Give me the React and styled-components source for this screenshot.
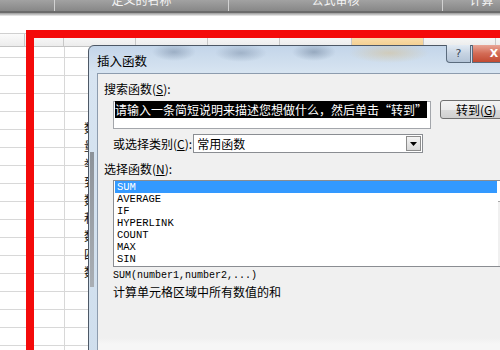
import React from "react";
import styled, { createGlobalStyle } from "styled-components";

const GlobalStyle = createGlobalStyle`
  html, body {
    margin: 0;
    padding: 0;
    background: #ffffff;
  }
  body {
    font-family: "Noto Sans CJK SC", "Noto Sans", sans-serif;
  }
`;

const ribbonGroups = [
  { label: "", width: 55 },
  { label: "定义的名称", width: 174 },
  { label: "公式审核", width: 214 },
  { label: "计算", width: 78 },
];

const headerCells = [
  { width: 25 },
  { width: 39 },
  { width: 72 },
  { width: 72 },
  { width: 72 },
  { width: 72 },
  { width: 72, active: true },
  { width: 72 },
  { width: 72 },
];

// text in the sheet column that the dialog mostly hides
const sheetText = ["", "", "", "", "数", "量", "举", "到", "数", "和", "数", "四", "数"];

const functions = ["SUM", "AVERAGE", "IF", "HYPERLINK", "COUNT", "MAX", "SIN"];

const App = () => {
  return (
    <Page>
      <GlobalStyle />
      <Ribbon>
        {ribbonGroups.map((g, i) => (
          <RibbonGroup key={i} $width={g.width}>
            <RibbonLabel>{g.label}</RibbonLabel>
          </RibbonGroup>
        ))}
      </Ribbon>
      <RibbonEdge />
      <Sheet>
        <ColumnHeader>
          {headerCells.map((c, i) => (
            <HeaderCell key={i} $width={c.width} $active={c.active} />
          ))}
        </ColumnHeader>
        <Grid>
          {sheetText.map((t, i) => (
            <SheetCell key={i}>{t}</SheetCell>
          ))}
        </Grid>

        <Highlight />

        <Dialog>
          <TitleBar>
            <Title>插入函数</Title>
            <CaptionButtons>
              <HelpButton>?</HelpButton>
              <CloseButton>X</CloseButton>
            </CaptionButtons>
          </TitleBar>
          <Body>
            <Label>
              搜索函数(<u>S</u>):
            </Label>
            <SearchRow>
              <SearchBox>
                <Selected>请输入一条简短说明来描述您想做什么，然后单击“转到”</Selected>
              </SearchBox>
              <GoButton>
                转到(<u>G</u>)
              </GoButton>
            </SearchRow>
            <CategoryRow>
              <Label>
                或选择类别(<u>C</u>):
              </Label>
              <Select>
                <SelectText>常用函数</SelectText>
                <DropButton>
                  <svg width="7" height="4" viewBox="0 0 7 4">
                    <path d="M0 0h7L3.5 4z" fill="#000" />
                  </svg>
                </DropButton>
              </Select>
            </CategoryRow>
            <Label $top={9}>
              选择函数(<u>N</u>):
            </Label>
            <ListRow>
              <List>
                {functions.map((f, i) => (
                  <ListItem key={f} $selected={i === 0}>
                    {f}
                  </ListItem>
                ))}
              </List>
              <ScrollBar>
                <ScrollArrow />
              </ScrollBar>
            </ListRow>
            <Signature>SUM(number1,number2,...)</Signature>
            <Description>计算单元格区域中所有数值的和</Description>
          </Body>
        </Dialog>
      </Sheet>
    </Page>
  );
};

const Page = styled.div`
  position: relative;
  width: 500px;
  height: 350px;
  overflow: hidden;
  background: #ffffff;
`;

const Ribbon = styled.div`
  display: flex;
  height: 11px;
  background: linear-gradient(#a2a2a2, #878787);
  overflow: hidden;
`;

const RibbonGroup = styled.div`
  flex: 0 0 ${(p) => p.$width}px;
  box-sizing: border-box;
  display: flex;
  align-items: flex-end;
  justify-content: center;
  border-right: 1px solid #d2d2d2;
  overflow: hidden;
`;

const RibbonLabel = styled.span`
  font-size: 12px;
  line-height: 12px;
  padding-bottom: 5px;
  color: #f4f4f4;
  white-space: nowrap;
`;

const RibbonEdge = styled.div`
  height: 5px;
  background: linear-gradient(#6b6b6b 0, #6b6b6b 2px, #9a9a9a 2px, #cfcfcf 4px, #f4f4f4 5px);
`;

const Sheet = styled.div`
  padding-top: 17px;
`;

const ColumnHeader = styled.div`
  display: flex;
  height: 14px;
  box-sizing: border-box;
  border-top: 1px solid #d0d0d0;
  border-bottom: 1px solid #c3c3c3;
  background: linear-gradient(#fbfbfb, #ececec);
`;

const HeaderCell = styled.div`
  flex: 0 0 ${(p) => p.$width}px;
  box-sizing: border-box;
  border-right: 1px solid #c8c8c8;
  background: ${(p) => (p.$active ? "linear-gradient(#fbe3b8, #f4cf90)" : "transparent")};
`;

const Grid = styled.div`
  height: 303px;
  padding-left: 84px;
  background-image: linear-gradient(#d8d8d8 1px, transparent 1px),
    linear-gradient(90deg, #d8d8d8 1px, transparent 1px);
  background-size: 100% 18px, 72px 100%;
  background-position: 0 10px, 64px 0;
`;

const SheetCell = styled.div`
  height: 18px;
  line-height: 18px;
  font-size: 12px;
  color: #111;
`;

const Highlight = styled.div`
  position: absolute;
  left: 26px;
  top: 30px;
  width: 520px;
  height: 400px;
  border: 8px solid #f40a0a;
  box-sizing: border-box;
`;

const Dialog = styled.div`
  position: absolute;
  left: 88px;
  top: 45px;
  width: 436px;
  height: 330px;
  box-sizing: border-box;
  border: 1px solid #4d5866;
  border-radius: 6px 6px 0 0;
  background:
    linear-gradient(#8c9299, #a9aeb4) 1px 106px / 4px 135px no-repeat,
    radial-gradient(ellipse 22px 9px at 85px 6px, rgba(120, 140, 165, 0.55), transparent),
    radial-gradient(ellipse 26px 9px at 152px 7px, rgba(120, 140, 165, 0.5), transparent),
    radial-gradient(ellipse 22px 9px at 225px 6px, rgba(110, 130, 155, 0.55), transparent),
    radial-gradient(ellipse 40px 10px at 300px 7px, rgba(215, 190, 140, 0.5), transparent),
    linear-gradient(#c3d5e9, #d7e4f1 26px, #cfdeed);
  display: flex;
  flex-direction: column;
`;

const TitleBar = styled.div`
  display: flex;
  height: 27px;
  padding: 0 7px 0 8px;
`;

const Title = styled.div`
  font-size: 12.5px;
  line-height: 14px;
  padding-top: 8px;
  color: #000;
`;

const CaptionButtons = styled.div`
  display: flex;
  gap: 1px;
  margin-left: auto;
  margin-top: -1px;
`;

const CaptionButton = styled.div`
  height: 18px;
  box-sizing: border-box;
  display: flex;
  align-items: center;
  justify-content: center;
  border: 1px solid #5b6b7d;
  border-top: none;
  font-family: "DejaVu Sans", sans-serif;
  font-size: 11px;
`;

const HelpButton = styled(CaptionButton)`
  width: 25px;
  border-radius: 0 0 0 4px;
  background: linear-gradient(#e3ebf4, #c6d3e2 50%, #b4c4d7);
  color: #3a4858;
`;

const CloseButton = styled(CaptionButton)`
  width: 44px;
  border-radius: 0 0 4px 0;
  background: linear-gradient(#e8a596, #d36b55 50%, #c24a32);
  color: #ffffff;
  font-weight: bold;
`;

const Body = styled.div`
  flex: 1;
  margin-left: 8px;
  padding: 8px 0 0 6px;
  border-top: 1px solid #8d9cae;
  border-left: 1px solid #8d9cae;
  background: linear-gradient(#f0f0f0 264px, #f6f6f6 270px);
  display: flex;
  flex-direction: column;
`;

const Label = styled.div`
  font-size: 12px;
  line-height: 14px;
  color: #000;
  white-space: nowrap;
  margin-top: ${(p) => p.$top || 0}px;
`;

const SearchRow = styled.div`
  display: flex;
  align-items: flex-start;
  margin-top: 5px;
  padding-left: 9px;
`;

const SearchBox = styled.div`
  width: 318px;
  height: 28px;
  box-sizing: border-box;
  border: 1px solid #a3a6ab;
  background: #ffffff;
  padding: 0 0 0 1px;
  font-size: 12px;
  line-height: 15px;
  white-space: nowrap;
`;

const Selected = styled.span`
  background: #000000;
  color: #ffffff;
`;

const GoButton = styled.div`
  width: 72px;
  height: 19px;
  box-sizing: border-box;
  margin: -1px 0 0 9px;
  border: 1px solid #707070;
  border-radius: 3px;
  background: linear-gradient(#f3f3f3, #ebebeb 50%, #dcdcdc 51%, #cfcfcf);
  font-size: 12px;
  line-height: 17px;
  padding-left: 15px;
  color: #000;
  white-space: nowrap;
`;

const CategoryRow = styled.div`
  display: flex;
  align-items: center;
  margin-top: 5px;
  padding-left: 9px;
  height: 19px;
`;

const Select = styled.div`
  display: flex;
  align-items: center;
  margin-left: 1px;
  width: 230px;
  height: 19px;
  box-sizing: border-box;
  border: 1px solid #8a8d92;
  background: #ffffff;
  padding: 0 1px 0 3px;
`;

const SelectText = styled.span`
  flex: 1;
  font-size: 12px;
  line-height: 14px;
`;

const DropButton = styled.div`
  width: 15px;
  height: 15px;
  box-sizing: border-box;
  border: 1px solid #8c8c8c;
  background: linear-gradient(#f4f4f4, #d8d8d8);
  display: flex;
  align-items: center;
  justify-content: center;
`;

const ListRow = styled.div`
  display: flex;
  margin-top: 4px;
  margin-left: 9px;
  height: 87px;
  box-sizing: border-box;
  border: 1px solid #8a8d92;
  background: #ffffff;
`;

const List = styled.div`
  width: 382px;
  padding-left: 1px;
`;

const ListItem = styled.div`
  height: 12px;
  line-height: 12px;
  padding-left: 2px;
  font-family: "Liberation Mono", monospace;
  font-size: 10.5px;
  color: ${(p) => (p.$selected ? "#ffffff" : "#000000")};
  background: ${(p) => (p.$selected ? "#3399ff" : "transparent")};
`;

const ScrollBar = styled.div`
  width: 17px;
  margin-left: 1px;
  background: #f0f0f0;
`;

const ScrollArrow = styled.div`
  height: 20px;
  background: #ffffff;
  border-bottom: 1px solid #a9a9a9;
`;

const Signature = styled.div`
  margin: 3px 0 0 9px;
  font-family: "Liberation Mono", monospace;
  font-size: 10px;
  line-height: 12px;
  color: #000;
`;

const Description = styled.div`
  margin: 3px 0 0 9px;
  font-size: 12px;
  line-height: 14px;
  color: #000;
`;

export default App;
